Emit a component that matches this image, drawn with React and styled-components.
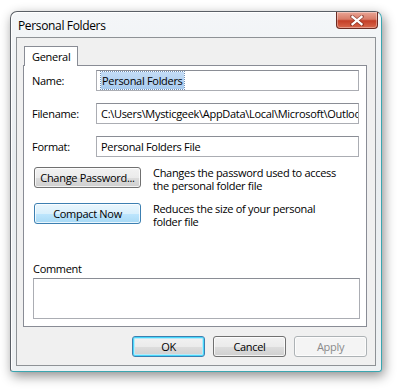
import React from "react";
import styled, { createGlobalStyle } from "styled-components";

const GlobalStyle = createGlobalStyle`
  body {
    margin: 0;
    background: #ffffff;
    font-family: "Open Sans", "Noto Sans", sans-serif;
    font-size: 11px;
    letter-spacing: -0.3px;
    color: #000;
  }
`;

const Page = styled.div`
  width: 397px;
  height: 390px;
  padding: 11px 0 0 10px;
  box-sizing: border-box;
`;

const Window = styled.div`
  width: 372px;
  height: 361px;
  box-sizing: border-box;
  border: 1px solid #5a5f66;
  border-right-color: #3aa6b0;
  border-bottom-color: #3aa6b0;
  border-radius: 7px 7px 3px 3px;
  background: linear-gradient(180deg, #f4f6f8 0%, #e9edf0 40%, #eef1f3 100%);
  box-shadow: 2px 4px 12px rgba(0, 0, 0, 0.45), inset 1px 1px 0 #ffffff;
  display: flex;
  flex-direction: column;
  padding: 0 5px 5px 5px;
`;

const TitleBar = styled.div`
  height: 25px;
  display: flex;
  align-items: flex-start;
  justify-content: space-between;
`;

const Title = styled.div`
  padding: 5px 0 0 2px;
  font-size: 12px;
  letter-spacing: -0.35px;
  color: #000;
`;

const CloseButton = styled.div`
  width: 42px;
  height: 17px;
  margin-right: -2px;
  box-sizing: border-box;
  border: 1px solid #6b2a22;
  border-top: none;
  border-radius: 0 0 4px 4px;
  background: linear-gradient(180deg, #eaa595 0%, #d87c68 45%, #c43e27 55%, #d9684c 100%);
  box-shadow: inset 0 0 0 1px rgba(255, 255, 255, 0.35);
  display: flex;
  align-items: center;
  justify-content: center;
`;

const Client = styled.div`
  flex: 1;
  border: 1px solid #8e9296;
  background: #f0f0f0;
  padding: 8px 8px 8px 6px;
  display: flex;
  flex-direction: column;
`;

const TabStrip = styled.div`
  display: flex;
  padding-left: 1px;
  height: 19px;
`;

const Tab = styled.div`
  position: relative;
  z-index: 1;
  height: 20px;
  padding: 0 7px;
  box-sizing: border-box;
  border: 1px solid #898c95;
  border-bottom: none;
  background: #ffffff;
  display: flex;
  align-items: center;
  line-height: 1;
`;

const Panel = styled.div`
  height: 262px;
  box-sizing: border-box;
  border: 1px solid #898c95;
  background: #ffffff;
  padding: 4px 6px 0 8px;
  display: flex;
  flex-direction: column;
`;

const FieldRow = styled.div`
  display: flex;
  align-items: center;
  height: 21px;
  margin-bottom: 12px;
  &:nth-child(3) {
    margin-bottom: 10px;
  }
`;

const Label = styled.div`
  width: 64px;
  flex-shrink: 0;
`;

const TextBox = styled.div`
  width: 263px;
  height: 21px;
  box-sizing: border-box;
  border: 1px solid #abadb3;
  border-top-color: #8a8d95;
  background: #ffffff;
  padding: 0 4px;
  display: flex;
  align-items: center;
  white-space: nowrap;
  overflow: hidden;
`;

const Selected = styled.span`
  background: linear-gradient(180deg, #c3dcf6, #a9cbee);
  color: #000;
  padding: 1px 1px;
  outline: 1px dotted #6f8fb5;
`;

const ActionRow = styled.div`
  display: flex;
  align-items: flex-start;
  margin-bottom: 11px;
  margin-left: 2px;
`;

const Button = styled.div`
  width: ${(p) => p.width || 107}px;
  height: 21px;
  box-sizing: border-box;
  flex-shrink: 0;
  white-space: nowrap;
  border: 1px solid
    ${(p) =>
      p.variant === "hot" || p.variant === "default"
        ? "#3c7fb1"
        : p.variant === "disabled"
        ? "#adb2b5"
        : "#707070"};
  border-radius: 3px;
  background: ${(p) =>
    p.variant === "hot"
      ? "linear-gradient(180deg, #eaf6fd 0%, #d9f0fc 50%, #bee6fd 51%, #a7d9f5 100%)"
      : p.variant === "disabled"
      ? "#f4f4f4"
      : "linear-gradient(180deg, #f2f2f2 0%, #ebebeb 50%, #dddddd 51%, #cfcfcf 100%)"};
  box-shadow: ${(p) =>
    p.variant === "default"
      ? "inset 0 0 0 1px #48d8fb, inset 0 0 0 2px #b9e9f9"
      : "inset 0 0 0 1px rgba(255, 255, 255, 0.75)"};
  color: ${(p) => (p.variant === "disabled" ? "#8a8a8a" : "#000")};
  display: flex;
  align-items: center;
  justify-content: center;
  line-height: 1;
`;

const Description = styled.div`
  margin-left: 12px;
  margin-top: -1px;
  line-height: 13px;
  white-space: nowrap;
`;

const Spacer = styled.div`
  flex: 1;
`;

const CommentLabel = styled.div`
  margin-left: 1px;
  margin-bottom: 2px;
`;

const CommentBox = styled.div`
  width: 327px;
  height: 41px;
  margin-left: 1px;
  margin-bottom: 7px;
  box-sizing: border-box;
  border: 1px solid #abadb3;
  border-top-color: #8a8d95;
  background: #ffffff;
`;

const Footer = styled.div`
  display: flex;
  justify-content: flex-end;
  gap: 8px;
  padding-top: 9px;
`;

export default function App() {
  return (
    <>
      <GlobalStyle />
      <Page>
        <Window>
          <TitleBar>
            <Title>Personal Folders</Title>
            <CloseButton>
              <svg width="14" height="11" viewBox="0 0 14 11">
                <path
                  d="M2 1.5 L12 9.5 M12 1.5 L2 9.5"
                  stroke="#5c1c12"
                  strokeWidth="3.6"
                  strokeLinecap="square"
                  opacity="0.5"
                />
                <path
                  d="M2.5 1.8 L11.5 9.2 M11.5 1.8 L2.5 9.2"
                  stroke="#ffffff"
                  strokeWidth="2.2"
                  strokeLinecap="square"
                />
              </svg>
            </CloseButton>
          </TitleBar>
          <Client>
            <TabStrip>
              <Tab>General</Tab>
            </TabStrip>
            <Panel>
              <FieldRow>
                <Label>Name:</Label>
                <TextBox>
                  <Selected>Personal Folders</Selected>
                </TextBox>
              </FieldRow>
              <FieldRow>
                <Label>Filename:</Label>
                <TextBox>C:\Users\Mysticgeek\AppData\Local\Microsoft\Outlook\Outlook.pst</TextBox>
              </FieldRow>
              <FieldRow>
                <Label>Format:</Label>
                <TextBox>Personal Folders File</TextBox>
              </FieldRow>
              <ActionRow>
                <Button>Change Password...</Button>
                <Description>
                  Changes the password used to access
                  <br />
                  the personal folder file
                </Description>
              </ActionRow>
              <ActionRow>
                <Button variant="hot">Compact Now</Button>
                <Description>
                  Reduces the size of your personal
                  <br />
                  folder file
                </Description>
              </ActionRow>
              <Spacer />
              <CommentLabel>Comment</CommentLabel>
              <CommentBox />
            </Panel>
            <Footer>
              <Button width={73} variant="default">OK</Button>
              <Button width={73}>Cancel</Button>
              <Button width={73} variant="disabled">Apply</Button>
            </Footer>
          </Client>
        </Window>
      </Page>
    </>
  );
}
